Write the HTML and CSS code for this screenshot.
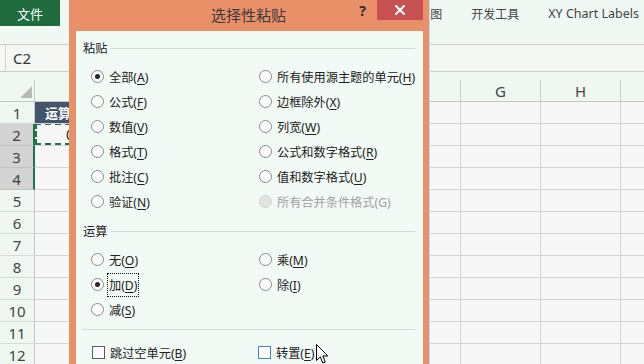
FILE: index.html
```html
<!DOCTYPE html>
<html lang="zh-CN">
<head>
<meta charset="utf-8">
<title>选择性粘贴</title>
<link rel="stylesheet" href="styles.css">
</head>
<body>
<div class="app">
  <div class="ribbon">
    <div class="file-tab">文件</div>
    <div class="tabs">
      <span>视图</span><span>开发工具</span><span class="latin">XY Chart Labels</span>
    </div>
  </div>
  <div class="formula-bar">
    <div class="name-box">C2</div>
  </div>
  <div class="header-gap"></div>
  <div class="grid">
    <div class="cell corner"><span class="tri"></span></div>
    <div class="cell colhead"></div><div class="cell colhead"></div><div class="cell colhead"></div><div class="cell colhead"></div><div class="cell colhead">G</div><div class="cell colhead">H</div><div class="cell colhead"></div>

    <div class="cell rowhead">1</div>
    <div class="cell title-cell">运算</div><div class="cell"></div><div class="cell"></div><div class="cell"></div><div class="cell"></div><div class="cell"></div><div class="cell"></div>

    <div class="cell rowhead sel">2</div>
    <div class="cell copy-cell">0</div><div class="cell"></div><div class="cell"></div><div class="cell"></div><div class="cell"></div><div class="cell"></div><div class="cell"></div>

    <div class="cell rowhead sel">3</div>
    <div class="cell"></div><div class="cell"></div><div class="cell"></div><div class="cell"></div><div class="cell"></div><div class="cell"></div><div class="cell"></div>

    <div class="cell rowhead sel">4</div>
    <div class="cell"></div><div class="cell"></div><div class="cell"></div><div class="cell"></div><div class="cell"></div><div class="cell"></div><div class="cell"></div>

    <div class="cell rowhead">5</div>
    <div class="cell"></div><div class="cell"></div><div class="cell"></div><div class="cell"></div><div class="cell"></div><div class="cell"></div><div class="cell"></div>

    <div class="cell rowhead">6</div>
    <div class="cell"></div><div class="cell"></div><div class="cell"></div><div class="cell"></div><div class="cell"></div><div class="cell"></div><div class="cell"></div>

    <div class="cell rowhead">7</div>
    <div class="cell"></div><div class="cell"></div><div class="cell"></div><div class="cell"></div><div class="cell"></div><div class="cell"></div><div class="cell"></div>

    <div class="cell rowhead">8</div>
    <div class="cell"></div><div class="cell"></div><div class="cell"></div><div class="cell"></div><div class="cell"></div><div class="cell"></div><div class="cell"></div>

    <div class="cell rowhead">9</div>
    <div class="cell"></div><div class="cell"></div><div class="cell"></div><div class="cell"></div><div class="cell"></div><div class="cell"></div><div class="cell"></div>

    <div class="cell rowhead">10</div>
    <div class="cell"></div><div class="cell"></div><div class="cell"></div><div class="cell"></div><div class="cell"></div><div class="cell"></div><div class="cell"></div>

    <div class="cell rowhead">11</div>
    <div class="cell"></div><div class="cell"></div><div class="cell"></div><div class="cell"></div><div class="cell"></div><div class="cell"></div><div class="cell"></div>

    <div class="cell rowhead">12</div>
    <div class="cell"></div><div class="cell"></div><div class="cell"></div><div class="cell"></div><div class="cell"></div><div class="cell"></div><div class="cell"></div>
  </div>
</div>

<div class="dialog">
  <div class="titlebar">
    <div></div>
    <div class="dlg-title">选择性粘贴</div>
    <div class="controls">
      <span class="help">?</span>
      <span class="close"><svg width="10" height="10" viewBox="0 0 10 10"><path d="M1 1 L9 9 M9 1 L1 9" stroke="#fff" stroke-width="2" stroke-linecap="square"/></svg></span>
    </div>
  </div>
  <div class="dlg-body">
    <div class="group-head"><span>粘贴</span></div>
    <div class="options">
      <label class="opt"><span class="radio checked"></span><span>全部(<u>A</u>)</span></label>
      <label class="opt"><span class="radio"></span><span>所有使用源主题的单元(<u>H</u>)</span></label>
      <label class="opt"><span class="radio"></span><span>公式(<u>F</u>)</span></label>
      <label class="opt"><span class="radio"></span><span>边框除外(<u>X</u>)</span></label>
      <label class="opt"><span class="radio"></span><span>数值(<u>V</u>)</span></label>
      <label class="opt"><span class="radio"></span><span>列宽(<u>W</u>)</span></label>
      <label class="opt"><span class="radio"></span><span>格式(<u>T</u>)</span></label>
      <label class="opt"><span class="radio"></span><span>公式和数字格式(<u>R</u>)</span></label>
      <label class="opt"><span class="radio"></span><span>批注(<u>C</u>)</span></label>
      <label class="opt"><span class="radio"></span><span>值和数字格式(<u>U</u>)</span></label>
      <label class="opt"><span class="radio"></span><span>验证(<u>N</u>)</span></label>
      <label class="opt disabled"><span class="radio"></span><span>所有合并条件格式(G)</span></label>
    </div>
    <div class="group-head op-head"><span>运算</span></div>
    <div class="options">
      <label class="opt"><span class="radio"></span><span>无(<u>O</u>)</span></label>
      <label class="opt"><span class="radio"></span><span>乘(<u>M</u>)</span></label>
      <label class="opt"><span class="radio checked"></span><span class="focus">加(<u>D</u>)</span></label>
      <label class="opt"><span class="radio"></span><span>除(<u>I</u>)</span></label>
      <label class="opt"><span class="radio"></span><span>减(<u>S</u>)</span></label>
      <span></span>
    </div>
    <div class="separator"></div>
    <div class="options checks">
      <label class="opt"><span class="check"></span><span>跳过空单元(<u>B</u>)</span></label>
      <label class="opt"><span class="check hover"></span><span>转置(<u>E</u>)</span></label>
    </div>
  </div>
</div>

<svg class="cursor" width="13" height="21" viewBox="0 0 13 21">
  <path d="M0.5 0.5 L0.5 16.5 L4.3 12.9 L6.8 19 L9.3 18 L6.8 12 L11.8 12 Z" fill="#fff" stroke="#000" stroke-width="1" stroke-linejoin="miter"/>
</svg>
</body>
</html>
```
FILE: styles.css
```css
html, body {
  margin: 0;
  padding: 0;
}
body {
  width: 644px;
  height: 364px;
  overflow: hidden;
  position: relative;
  background: #f7f7f7;
  font-family: "Noto Sans CJK SC", "Noto Sans", sans-serif;
  color: #222;
}

.app {
  display: flex;
  flex-direction: column;
  width: 644px;
}

/* Ribbon */
.ribbon {
  height: 44px;
  background: #eff8f2;
  border-bottom: 1px solid #c9cdca;
  display: flex;
  align-items: flex-start;
}
.file-tab {
  width: 60px;
  height: 26px;
  background: #1f6d3e;
  color: #fff;
  font-size: 13px;
  display: flex;
  align-items: center;
  justify-content: center;
}
.tabs {
  flex: 1;
  height: 26px;
  display: flex;
  align-items: center;
  justify-content: flex-end;
  gap: 29px;
  padding-right: 5px;
  font-size: 12px;
  color: #444;
  white-space: nowrap;
  overflow: hidden;
}
.tabs .latin {
  font-family: "Noto Sans", "Noto Sans CJK SC", sans-serif;
  font-size: 12.5px;
}

/* Formula bar */
.formula-bar {
  height: 26px;
  background: #f5f7f5;
  border-bottom: 1px solid #c9cdca;
  display: flex;
  align-items: stretch;
}
.name-box {
  margin-left: 5px;
  width: 110px;
  border-left: 1px solid #cfd3d0;
  padding-left: 7px;
  font-family: "Noto Sans", sans-serif;
  font-size: 15px;
  color: #333;
  display: flex;
  align-items: center;
}

.header-gap {
  height: 8px;
  background: #eef8f1;
}

/* Grid */
.grid {
  display: grid;
  grid-template-columns: 35px 186px 80px 80px 80px 80px 80px 80px;
  grid-auto-rows: 22px;
}
.cell {
  box-sizing: border-box;
  border-right: 1px solid #d2d4d2;
  border-bottom: 1px solid #d2d4d2;
  background: #f7f7f7;
  font-family: "Noto Sans", sans-serif;
  font-size: 15px;
  color: #444;
  display: flex;
  align-items: center;
  white-space: nowrap;
  overflow: hidden;
}
.corner, .colhead {
  background: #eef8f1;
  border-bottom-color: #c4c8c5;
  border-right-color: #c9ccca;
}
.colhead {
  justify-content: center;
}
.corner {
  justify-content: flex-end;
  align-items: flex-end;
  padding: 0 2px 3px 0;
}
.tri {
  width: 0;
  height: 0;
  border-left: 12px solid transparent;
  border-bottom: 12px solid #b7b9b8;
}
.rowhead {
  background: #eef8f1;
  justify-content: center;
  border-right-color: #c4c8c5;
  border-bottom-color: #d7dbd8;
}
.rowhead.sel {
  background: #d3d3d3;
  color: #3f3f3f;
  border-right: 2px solid #217346;
  border-bottom-color: #c2c2c2;
}
.title-cell {
  background: #44546a;
  color: #fff;
  font-family: "Noto Sans CJK SC", sans-serif;
  font-weight: bold;
  font-size: 13px;
  padding-left: 10px;
}
.copy-cell {
  position: relative;
  padding-left: 31px;
  color: #222;
  font-size: 14px;
}
.copy-cell::after {
  content: "";
  position: absolute;
  top: -1px;
  left: 0;
  right: -1px;
  bottom: 0;
  border: 2px dashed #217346;
}

/* Dialog */
.dialog {
  position: absolute;
  left: 69px;
  top: 0;
  width: 359px;
  height: 380px;
  box-sizing: border-box;
  padding: 0 5px 0 7px;
  background: #ea9068;
  box-shadow: 1px 0 0 #c4a090, 2px 0 0 #cfd3d0;
  display: flex;
  flex-direction: column;
}
.titlebar {
  height: 31px;
  margin: 0 -5px 0 -7px;
  display: grid;
  grid-template-columns: 1fr auto 1fr;
  align-items: start;
}
.dlg-title {
  font-size: 15px;
  color: #3a3a3a;
  line-height: 30px;
}
.controls {
  display: flex;
  justify-content: flex-end;
  align-items: flex-start;
  padding-right: 5px;
}
.help {
  font-family: "Noto Sans", sans-serif;
  font-weight: bold;
  font-size: 14px;
  color: #2b2b2b;
  line-height: 22px;
  margin-right: 11px;
}
.close {
  width: 46px;
  height: 20px;
  background: #c75050;
  display: flex;
  align-items: center;
  justify-content: center;
}

.dlg-body {
  flex: 1;
  background: #f1faf4;
  padding: 8px 8px 0 7px;
  font-family: "Noto Sans", "Noto Sans CJK SC", sans-serif;
  font-size: 12.2px;
  color: #222;
}
.group-head {
  height: 18px;
  display: flex;
  align-items: center;
  gap: 4px;
}
.group-head::after {
  content: "";
  flex: 1;
  height: 1px;
  background: #d3d8d4;
}
.op-head {
  margin-top: 8px;
}
.options {
  margin-top: 7px;
  margin-left: 8px;
  display: grid;
  grid-template-columns: 168px 1fr;
  grid-auto-rows: 25px;
}
.opt {
  display: flex;
  align-items: center;
  gap: 5px;
  white-space: nowrap;
}
.opt u {
  text-decoration-thickness: 1px;
  text-underline-offset: 2px;
}
.radio {
  width: 13px;
  height: 13px;
  box-sizing: border-box;
  border: 1px solid #8a8a8a;
  border-radius: 50%;
  background: #fcfcfc;
  display: flex;
  align-items: center;
  justify-content: center;
  flex: none;
}
.radio.checked::after {
  content: "";
  width: 5px;
  height: 5px;
  border-radius: 50%;
  background: #262626;
}
.opt.disabled {
  color: #a2a2a2;
}
.opt.disabled .radio {
  background: #e2e4e3;
  border-color: #cfd1d0;
}
.focus {
  padding: 1px 0;
  outline: 1px dotted #111;
  outline-offset: 1px;
}
.separator {
  margin-top: 7px;
  margin-left: -1px;
  height: 1px;
  background: #d3d8d4;
}
.checks {
  margin-top: 10px;
  margin-left: 9px;
  grid-template-columns: 166px 1fr;
}
.check {
  width: 13px;
  height: 13px;
  box-sizing: border-box;
  border: 1px solid #5a5a5a;
  background: #fcfcfc;
  flex: none;
}
.check.hover {
  border-color: #3d86c6;
}

.cursor {
  position: absolute;
  left: 316px;
  top: 344px;
}
```
